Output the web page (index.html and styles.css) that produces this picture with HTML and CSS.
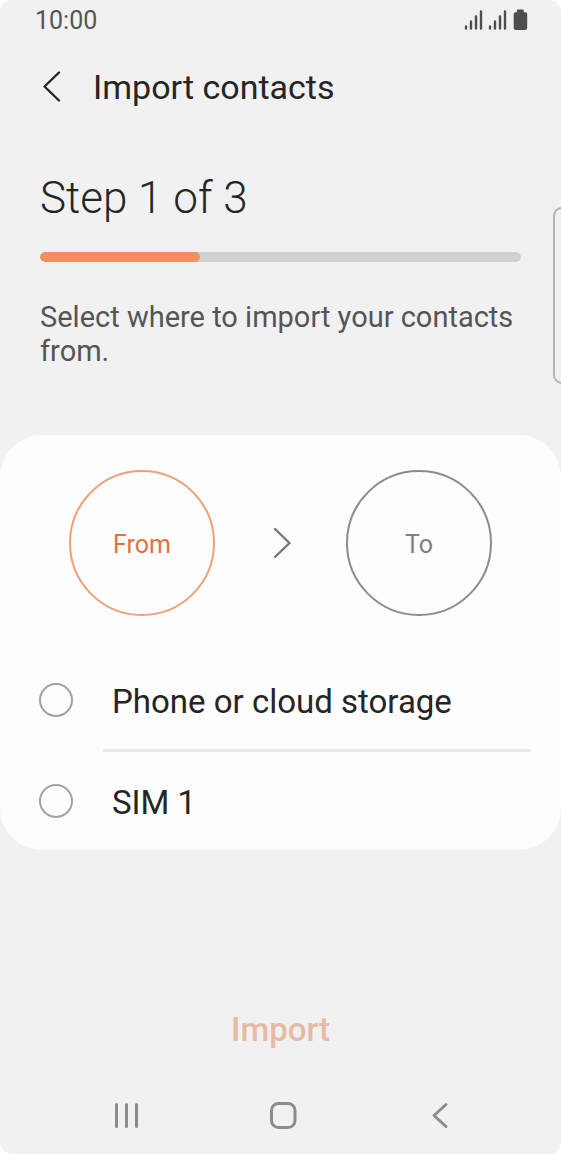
FILE: index.html
```html
<!DOCTYPE html>
<html lang="en">
<head>
<meta charset="utf-8">
<meta name="viewport" content="width=device-width, initial-scale=1">
<title>Import contacts</title>
<link rel="stylesheet" href="styles.css">
</head>
<body>
<div class="screen">
  <div class="status-bar">
    <time class="clock">10:00</time>
    <svg class="status-icons" width="64" height="24" viewBox="0 0 64 24" aria-hidden="true">
      <g class="signal">
        <path d="M2 17.500v2M7 12.500v7M12 7.500v12M17 2.500v17"/>
        <path d="M26 17.500v2M31 12.500v7M36 7.500v12M41 2.500v17"/>
      </g>
      <path class="battery" d="M53.800.5h5a1 1 0 0 1 1 1v1.700h1.700a1.700 1.700 0 0 1 1.700 1.700v14a2 2 0 0 1-2 2h-9.500a2 2 0 0 1-2-2v-14a1.700 1.700 0 0 1 1.700-1.700h1.400V1.500a1 1 0 0 1 1-1z"/>
    </svg>
  </div>

  <header class="app-bar">
    <button class="icon-button" type="button" aria-label="Back">
      <svg width="18" height="32" viewBox="0 0 18 32" aria-hidden="true"><path class="back-arrow" d="M16 1.500L1.500 15.500 16 29.500"/></svg>
    </button>
    <h1 class="title">Import contacts</h1>
  </header>

  <main class="content">
    <section class="intro">
      <h2 class="step" id="step">Step 1 of 3</h2>
      <div class="progress" role="progressbar" aria-labelledby="step" aria-valuemin="0" aria-valuemax="3" aria-valuenow="1">
        <div class="progress-fill"></div>
      </div>
      <p class="hint">Select where to import your contacts from.</p>
    </section>

    <form class="card" id="import-form">
      <div class="route">
        <div class="stop stop-active">From</div>
        <svg width="20" height="32" viewBox="0 0 20 32" aria-hidden="true"><path class="route-arrow" d="M4 2L18.500 16 4 30"/></svg>
        <div class="stop">To</div>
      </div>
      <div class="options" role="radiogroup" aria-label="Import from">
        <label class="option"><input class="radio" type="radio" name="source" value="phone"><span class="option-text">Phone or cloud storage</span></label>
        <hr class="divider">
        <label class="option"><input class="radio" type="radio" name="source" value="sim1"><span class="option-text">SIM 1</span></label>
      </div>
    </form>
  </main>

  <button class="import" type="submit" form="import-form" disabled>Import</button>

  <nav class="nav-bar" aria-label="System navigation">
    <button class="nav-button" type="button" aria-label="Recent apps">
      <svg width="28" height="28" viewBox="0 0 28 28" aria-hidden="true"><path d="M4.500 3.500v22M14.500 3.500v22M24.500 3.500v22"/></svg>
    </button>
    <button class="nav-button" type="button" aria-label="Home">
      <svg width="28" height="28" viewBox="0 0 28 28" aria-hidden="true"><rect x="2.500" y="2.500" width="23.500" height="24" rx="7"/></svg>
    </button>
    <button class="nav-button" type="button" aria-label="Back">
      <svg width="28" height="28" viewBox="0 0 28 28" aria-hidden="true"><path d="M20 3.500L8 14.500l12 11"/></svg>
    </button>
  </nav>

  <div class="edge-handle"></div>
</div>
</body>
</html>
```

FILE: styles.css
```css
* {
  box-sizing: border-box;
}

body {
  margin: 0;
  background: #fff;
  color: #252525;
  font-family: Roboto, "Liberation Sans", sans-serif;
}

button {
  padding: 0;
  border: 0;
  background: none;
  font-family: inherit;
}

svg {
  display: block;
  fill: none;
}

.screen {
  position: relative;
  display: flex;
  flex-direction: column;
  min-height: 100vh;
  overflow: hidden;
  border-radius: 12px;
  background: #f1f1f1;
}

.status-bar {
  display: flex;
  align-items: center;
  justify-content: space-between;
  height: 42px;
  padding: 0 33px 0 35px;
}

.clock {
  color: #555;
  font-size: 25px;
  line-height: 42px;
}

.signal {
  stroke: #4d4d4d;
  stroke-width: 2.400;
  stroke-linecap: round;
}

.battery {
  fill: #4d4d4d;
}

.app-bar {
  display: flex;
  align-items: center;
  gap: 21px;
  height: 90px;
  padding: 0 32px;
}

.icon-button {
  display: grid;
  place-items: center;
  width: 40px;
  height: 48px;
}

.back-arrow {
  stroke: #252525;
  stroke-width: 2.400;
  stroke-linecap: round;
  stroke-linejoin: round;
}

.title {
  margin: 0;
  font-size: 34px;
  font-weight: 400;
  line-height: 40px;
}

.intro {
  padding: 40px 40px 67px;
}

.step {
  margin: 0 0 28px;
  font-size: 44px;
  font-weight: 300;
  line-height: 52px;
}

.progress {
  height: 10px;
  overflow: hidden;
  border-radius: 5px;
  background: #d1d1d1;
}

.progress-fill {
  width: 33.333%;
  height: 100%;
  border-radius: 5px;
  background: #f18f60;
}

.hint {
  margin: 38px 0 0;
  color: #555;
  font-size: 29px;
  line-height: 34px;
}

.card {
  padding-top: 35px;
  border-radius: 42px;
  background: #fdfdfd;
}

.route {
  display: flex;
  align-items: center;
  justify-content: space-between;
  margin-bottom: 35px;
  padding: 0 69px;
}

.stop {
  display: grid;
  place-items: center;
  width: 146px;
  height: 146px;
  padding-top: 2px;
  border: 2px solid #8c8c8c;
  border-radius: 50%;
  color: #808080;
  font-size: 25px;
}

.stop-active {
  border-color: #f0a077;
  color: #e2733d;
}

.route-arrow {
  stroke: #777;
  stroke-width: 2.400;
  stroke-linecap: round;
  stroke-linejoin: round;
}

.option {
  display: flex;
  align-items: center;
  gap: 39px;
  min-height: 98px;
  padding: 0 39px;
  font-size: 33px;
  line-height: 40px;
}

.option-text {
  padding-top: 3px;
}

.radio {
  flex: none;
  width: 34px;
  height: 34px;
  margin: 0;
  appearance: none;
  border: 2px solid #a3a3a3;
  border-radius: 50%;
}

.radio:checked {
  border: 10px solid #e2733d;
}

.divider {
  height: 3px;
  margin: 0 30px 0 103px;
  border: 0;
  background: #e9e9e9;
}

.import {
  align-self: center;
  height: 72px;
  margin: auto 0 11px;
  padding: 0 24px;
  color: #e5bba6;
  font-size: 33px;
  font-weight: 500;
}

.nav-bar {
  display: grid;
  grid-template-columns: repeat(3, 1fr);
  height: 78px;
  padding: 0 43px 0 47px;
}

.nav-button {
  display: grid;
  place-items: center;
  stroke: #8c8c8c;
  stroke-width: 3;
  stroke-linecap: round;
  stroke-linejoin: round;
}

.edge-handle {
  position: absolute;
  top: 207px;
  right: -10px;
  width: 18px;
  height: 177px;
  border: 2px solid #b5b5b5;
  border-radius: 9px;
}
```
